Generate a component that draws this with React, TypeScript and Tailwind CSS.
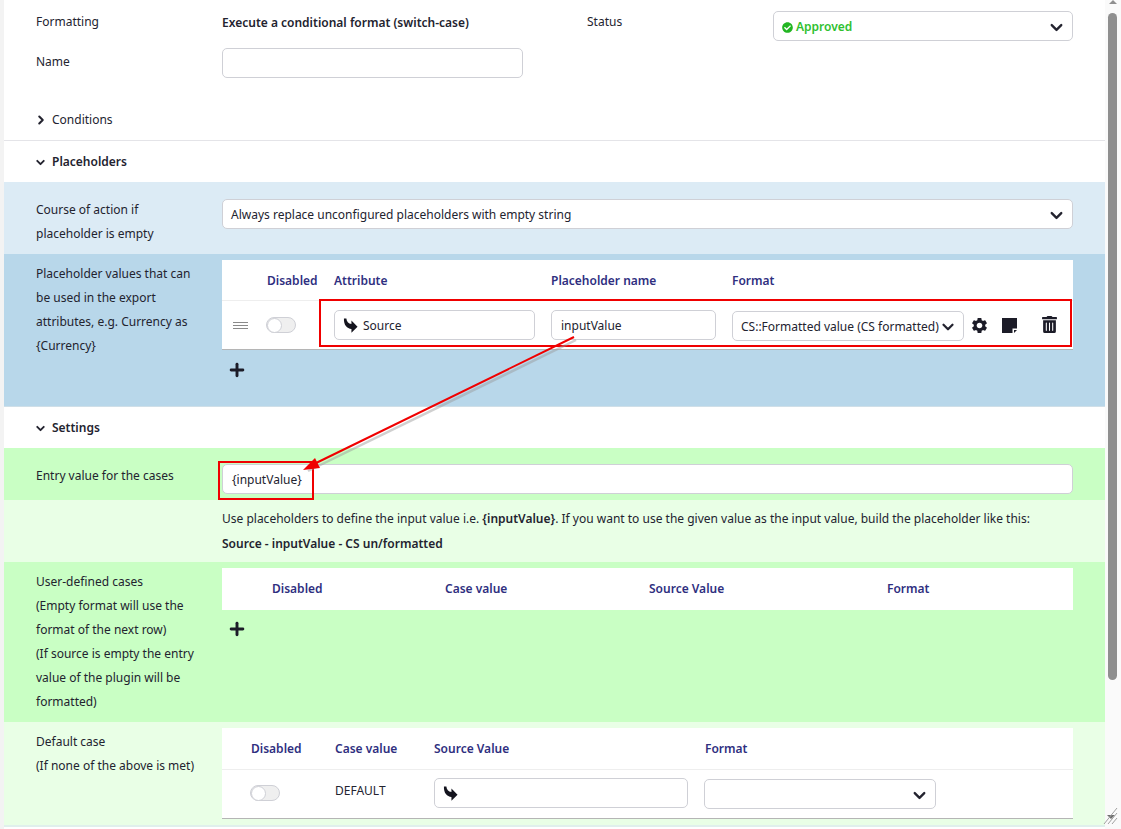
import { ChevronDown, ChevronRight, Plus } from "lucide-react";
import { FaCheckCircle, FaTrashAlt } from "react-icons/fa";
import { MdSettings } from "react-icons/md";

const headCell = "text-[12px] font-semibold text-[#2f2f7f]";
const inputBox =
  "bg-white border border-[#cfd0d6] rounded-[5px] h-[30px] flex items-center pt-[2px] text-[12px] text-[#23232f]";

function Chevron() {
  return <ChevronDown size={19} strokeWidth={3} className="text-[#23232f]" />;
}

function SourceArrow() {
  return (
    <svg viewBox="0 0 16 17" className="w-[15px] h-[16px] text-[#14141e]" fill="currentColor">
      <path d="M1 0.5 L3.6 0.5 C3.8 3.8 5.6 6 9 6.4 L9 2.6 L15.5 9.2 L9 15.8 L9 11.6 C4.4 11.4 0.6 7.5 1 0.5 Z" />
    </svg>
  );
}

function NoteIcon() {
  return (
    <svg viewBox="0 0 15 15" className="w-[15px] h-[15px] text-[#1c1c28]" fill="currentColor">
      <path d="M0 0 H15 V10.5 H10.5 V15 H0 Z" />
      <path d="M12 12 H15 L12 15 Z" />
    </svg>
  );
}

function Toggle() {
  return (
    <div className="w-[30px] h-[16px] rounded-full border border-[#cfd0d6] bg-[#efefef] flex items-center">
      <div className="w-[15px] h-[15px] rounded-full bg-white border border-[#cfd0d6]" />
    </div>
  );
}

function Label({ lines }: { lines: string[] }) {
  return (
    <div className="w-[218px] shrink-0 pl-[32px] text-[12px] leading-[24px] text-[#23232f]">
      {lines.map((line) => (
        <div key={line}>{line}</div>
      ))}
    </div>
  );
}

function SectionHeader({ title }: { title: string }) {
  return (
    <div className="flex items-center gap-[5px] pl-[30px] pt-[1px] h-[41px] text-[12px] font-semibold text-[#23232f]">
      <ChevronDown size={13} strokeWidth={3.5} />
      {title}
    </div>
  );
}

export default function App() {
  return (
    <div className="relative h-[829px] w-[1121px] overflow-hidden bg-white font-['Noto_Sans',sans-serif]">
      <div className="flex h-full">
        <div className="w-[4px] shrink-0 bg-[#f3f3f3]" />
        <div className="w-[1101px] shrink-0">
          {/* General */}
          <div className="h-[100px] pt-[11px] text-[12px] text-[#23232f]">
            <div className="flex h-[30px]">
              <div className="w-[218px] pl-[32px] pt-[2px] leading-[18px]">Formatting</div>
              <div className="w-[365px] pt-[1px] leading-[22px] font-semibold">
                Execute a conditional format (switch-case)
              </div>
              <div className="w-[186px] pt-[2px] leading-[18px]">Status</div>
              <div className={`${inputBox} w-[300px] justify-between pl-[8px] pr-[6px]`}>
                <span className="flex items-center gap-[3px] font-semibold text-[#2fc12f]">
                  <FaCheckCircle size={11} className="text-[#22b522]" />
                  Approved
                </span>
                <Chevron />
              </div>
            </div>
            <div className="flex h-[30px] mt-[7px]">
              <div className="w-[218px] pl-[32px] pt-[5px] leading-[18px]">Name</div>
              <div className={`${inputBox} w-[301px]`} />
            </div>
          </div>
          <div className="flex items-center gap-[4px] pl-[30px] pb-[1px] h-[41px] border-b border-[#e4e4e8] text-[12px] text-[#23232f]">
            <ChevronRight size={14} strokeWidth={3.5} />
            Conditions
          </div>

          <SectionHeader title="Placeholders" />
          <div className="flex h-[72px] bg-[#dcebf5] pt-[16px]">
            <Label lines={["Course of action if", "placeholder is empty"]} />
            <div className="flex-1 pr-[32px] mt-[1px]">
              <div className={`${inputBox} justify-between pl-[8px] pr-[6px]`}>
                Always replace unconfigured placeholders with empty string
                <Chevron />
              </div>
            </div>
          </div>
          <div className="flex h-[153px] bg-[#b8d7ea] border-b border-[#cfdfe8] pt-[8px]">
            <Label
              lines={["Placeholder values that can", "be used in the export", "attributes, e.g. Currency as", "{Currency}"]}
            />
            <div className="flex-1 pr-[32px] -mt-[2px]">
              <div className="bg-white border-b border-[#b5b5b5] h-[90px]">
                <div className="flex items-center h-[41px] border-b border-[#eeeeee]">
                  <div className={`${headCell} pt-[2px] w-[112px] pl-[45px]`}>Disabled</div>
                  <div className={`${headCell} pt-[2px] w-[217px]`}>Attribute</div>
                  <div className={`${headCell} pt-[2px] w-[181px]`}>Placeholder name</div>
                  <div className={`${headCell} pt-[2px]`}>Format</div>
                </div>
                <div className="flex items-center h-[48px]">
                  <div className="w-[44px] pl-[11px] flex flex-col gap-[2px]">
                    <div className="w-[15px] h-px bg-[#8a8a8a]" />
                    <div className="w-[15px] h-px bg-[#8a8a8a]" />
                    <div className="w-[15px] h-px bg-[#8a8a8a]" />
                  </div>
                  <div className="w-[68px]">
                    <Toggle />
                  </div>
                  <div className={`${inputBox} w-[201px] mr-[16px] pl-[8px] gap-[5px]`}>
                    <SourceArrow />
                    Source
                  </div>
                  <div className={`${inputBox} w-[165px] mr-[16px] pl-[9px]`}>inputValue</div>
                  <div className={`${inputBox} w-[232px] mt-[2px] pl-[8px] whitespace-nowrap`}>
                    CS::Formatted value (CS formatted)
                    <ChevronDown size={18} strokeWidth={3} className="shrink-0" />
                  </div>
                  <MdSettings size={19} className="ml-[6px] text-[#1c1c28]" />
                  <div className="ml-[13px]">
                    <NoteIcon />
                  </div>
                  <FaTrashAlt size={17} className="ml-[24px] mb-[2px] text-[#1c1c28]" />
                </div>
              </div>
              <Plus size={20} strokeWidth={3.5} className="mt-[10px] ml-[5px] text-[#1c1c28]" />
            </div>
          </div>

          <SectionHeader title="Settings" />
          <div className="flex h-[52px] bg-[#c9ffc4] pt-[16px]">
            <Label lines={["Entry value for the cases"]} />
            <div className="flex-1 pr-[32px]">
              <div className={`${inputBox} pl-[9px]`}>{"{inputValue}"}</div>
            </div>
          </div>
          <div className="flex h-[62px] bg-[#e9ffe6]">
            <div className="w-[218px] shrink-0" />
            <div className="text-[12px] leading-[25px] pt-[6px] text-[#23232f]">
              <div>
                Use placeholders to define the input value i.e. <b className="font-semibold">{"{inputValue}"}</b>. If you
                want to use the given value as the input value, build the placeholder like this:
              </div>
              <div className="font-semibold">Source - inputValue - CS un/formatted</div>
            </div>
          </div>
          <div className="flex h-[160px] bg-[#c9ffc4] pt-[8px]">
            <Label
              lines={[
                "User-defined cases",
                "(Empty format will use the",
                "format of the next row)",
                "(If source is empty the entry",
                "value of the plugin will be",
                "formatted)",
              ]}
            />
            <div className="flex-1 pr-[32px] -mt-[2px]">
              <div className="flex items-center h-[42px] bg-white">
                <div className={`${headCell} w-[223px] pl-[50px]`}>Disabled</div>
                <div className={`${headCell} w-[204px]`}>Case value</div>
                <div className={`${headCell} w-[238px]`}>Source Value</div>
                <div className={headCell}>Format</div>
              </div>
              <Plus size={20} strokeWidth={3.5} className="mt-[9px] ml-[5px] text-[#1c1c28]" />
            </div>
          </div>
          <div className="flex h-[103px] bg-[#e9ffe6] pt-[8px]">
            <Label lines={["Default case", "(If none of the above is met)"]} />
            <div className="flex-1 pr-[32px] -mt-[2px]">
              <div className="bg-white border-b border-[#b5b5b5] h-[91px]">
                <div className="flex items-center h-[42px] border-b border-[#eeeeee]">
                  <div className={`${headCell} w-[113px] pl-[29px]`}>Disabled</div>
                  <div className={`${headCell} w-[99px]`}>Case value</div>
                  <div className={`${headCell} w-[271px]`}>Source Value</div>
                  <div className={headCell}>Format</div>
                </div>
                <div className="flex items-center h-[48px]">
                  <div className="w-[113px] pl-[28px] mb-[2px]">
                    <Toggle />
                  </div>
                  <div className="w-[99px] text-[12px] text-[#23232f] -mt-[6px]">DEFAULT</div>
                  <div className={`${inputBox} w-[254px] mr-[16px] mb-[2px] pl-[8px]`}>
                    <SourceArrow />
                  </div>
                  <div className={`${inputBox} w-[232px] justify-end pr-[6px]`}>
                    <Chevron />
                  </div>
                </div>
              </div>
            </div>
          </div>
          <div className="h-[2px] bg-[#e0f0ec]" />
        </div>

        {/* Scrollbar */}
        <div className="relative w-[16px] shrink-0 bg-[#fafafa]">
          <div className="absolute left-[4px] top-0 h-0 w-0 border-x-[4px] border-b-[4px] border-x-transparent border-b-[#8f8f8f]" />
          <div className="absolute left-[3px] top-[13px] h-[667px] w-[9px] rounded-full bg-[#8f8f8f]" />
          <div className="absolute left-[2px] top-[815px] h-0 w-0 border-x-[4px] border-t-[4px] border-x-transparent border-t-[#6f6f6f]" />
        </div>
      </div>

      {/* Annotations */}
      <div className="absolute left-[319px] top-[299px] h-[48px] w-[753px] border-2 border-[#f00000]" />
      <div className="absolute left-[218px] top-[461px] h-[39px] w-[96px] border-2 border-[#f00000]" />
      <svg className="absolute inset-0" width="1121" height="829" viewBox="0 0 1121 829">
        <line x1="574" y1="337" x2="306" y2="468" stroke="#999" strokeWidth="2.5" opacity="0.45" transform="translate(2 3)" />
        <line x1="574" y1="337" x2="312" y2="465" stroke="#f00000" strokeWidth="2" />
        <polygon points="303,470 315,458 320,468" fill="#f00000" />
        {/* resize grip */}
        <path d="M1104 824 L1117 808 M1108 824 L1117 813 M1112 824 L1117 818" stroke="#a0a0a0" strokeWidth="1" />
      </svg>
    </div>
  );
}
